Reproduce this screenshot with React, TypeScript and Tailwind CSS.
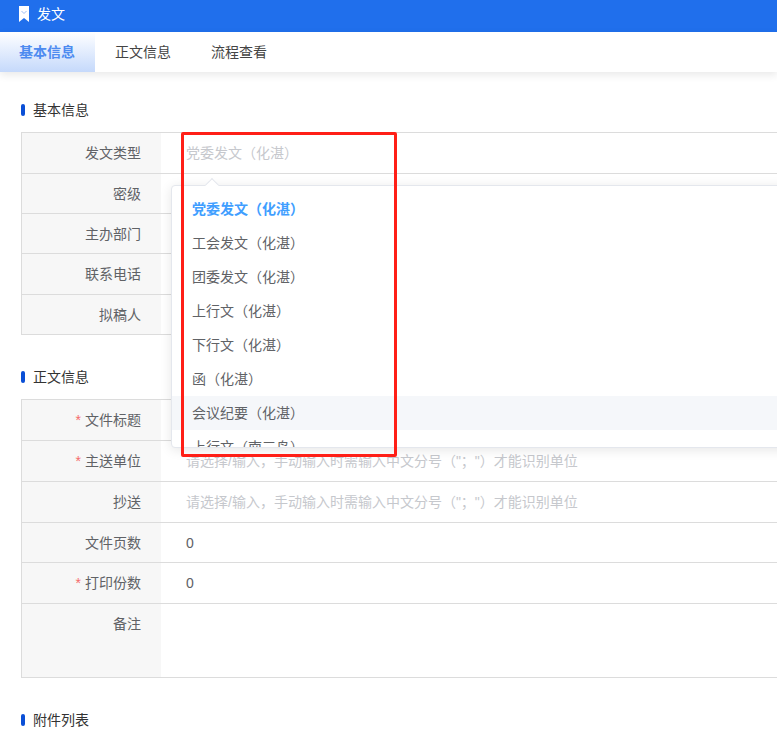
const font = '[font-family:"Liberation_Sans","Noto_Sans_CJK_SC",sans-serif]';

const baseRows = [
  { label: '发文类型', value: '党委发文（化湛）', placeholder: true, h: 'h-[41px]' },
  { label: '密级', h: 'h-[40px]' },
  { label: '主办部门', h: 'h-[40px]' },
  { label: '联系电话', h: 'h-[41px]' },
  { label: '拟稿人', h: 'h-[40px]' },
];

const hint = '请选择/输入，手动输入时需输入中文分号（"；"）才能识别单位';

const bodyRows = [
  { label: '文件标题', required: true, h: 'h-[41px]' },
  { label: '主送单位', required: true, value: hint, placeholder: true, h: 'h-[41px]' },
  { label: '抄送', value: hint, placeholder: true, h: 'h-[41px]' },
  { label: '文件页数', value: '0', h: 'h-[40px]' },
  { label: '打印份数', required: true, value: '0', h: 'h-[41px]' },
];

const options = [
  '党委发文（化湛）',
  '工会发文（化湛）',
  '团委发文（化湛）',
  '上行文（化湛）',
  '下行文（化湛）',
  '函（化湛）',
  '会议纪要（化湛）',
  '上行文（南三岛）',
];

type Row = { label: string; value?: string; placeholder?: boolean; required?: boolean; h: string };

function SectionTitle({ text }: { text: string }) {
  return (
    <div className="flex h-5 items-center pl-[21px]">
      <span className="h-3 w-1 rounded-sm bg-[#0a4fd6]" />
      <span className="ml-2 text-sm leading-5 text-[#333]">{text}</span>
    </div>
  );
}

function FormRow({ row }: { row: Row }) {
  return (
    <div className={`flex border-b border-[#dcdcdc] ${row.h}`}>
      <div className="flex w-[139px] shrink-0 items-center justify-end bg-[#f7f7f7] pr-5 text-sm text-[#606266]">
        {row.required && <span className="mr-1 text-[#f56c6c]">*</span>}
        {row.label}
      </div>
      <div className={`flex flex-1 items-center whitespace-nowrap pl-[25px] text-sm ${row.placeholder ? 'text-[#c6c8cd]' : 'text-[#606266]'}`}>
        {row.value}
      </div>
    </div>
  );
}

export default function App() {
  return (
    <div className={`relative h-[734px] w-[777px] overflow-hidden bg-white ${font}`}>
      {/* Header */}
      <div className="flex h-8 items-center bg-[#206fec] pb-1 pl-[19px] text-white">
        <svg width="10" height="16" viewBox="0 0 10 16">
          <path d="M0 0H10V16L5 12L0 16Z" fill="#fff" />
          <path d="M2.5 5L5 7.5L7.5 5" fill="none" stroke="#9dbdf5" strokeWidth="1" />
        </svg>
        <span className="ml-2 text-sm leading-5">发文</span>
      </div>

      {/* Tabs */}
      <div className="flex h-10 bg-white text-sm shadow-[0_3px_8px_rgba(0,0,0,0.09)]">
        <div className="flex w-[95px] items-center bg-gradient-to-b from-white to-[#c5d9fb] pl-[19px] font-bold text-[#4d8bf0]">
          基本信息
        </div>
        <div className="flex w-[116px] items-center pl-5 text-[#444]">正文信息</div>
        <div className="flex items-center text-[#444]">流程查看</div>
      </div>

      {/* 基本信息 */}
      <div className="pt-7">
        <SectionTitle text="基本信息" />
        <div className="ml-[21px] mt-[12px] w-[800px] border-l border-t border-[#dcdcdc]">
          {baseRows.map((r) => (
            <FormRow key={r.label} row={r} />
          ))}
        </div>
      </div>

      {/* 正文信息 */}
      <div className="pt-8">
        <SectionTitle text="正文信息" />
        <div className="ml-[21px] mt-[12px] w-[800px] border-l border-t border-[#dcdcdc]">
          {bodyRows.map((r) => (
            <FormRow key={r.label} row={r} />
          ))}
          <div className="flex h-[74px] border-b border-[#dcdcdc]">
            <div className="w-[139px] shrink-0 bg-[#f7f7f7] pr-5 pt-[10px] text-right text-sm leading-5 text-[#606266]">
              备注
            </div>
          </div>
        </div>
      </div>

      {/* 附件列表 */}
      <div className="pt-8">
        <SectionTitle text="附件列表" />
      </div>

      {/* Select dropdown */}
      <div className="absolute left-[171px] top-[185px] h-[263px] w-[700px] rounded border border-[#e4e7ed] bg-white pt-[6px] shadow-[0_2px_12px_rgba(0,0,0,0.1)]">
        <span className="absolute -top-[6px] left-[35px] h-[10px] w-[10px] rotate-45 border-l border-t border-[#e4e7ed] bg-white" />
        <div className="h-full overflow-hidden">
          {options.map((o, i) => (
            <div
              key={o}
              className={`flex h-[34px] items-center whitespace-nowrap pl-5 text-sm ${
                i === 0 ? 'font-bold text-[#409eff]' : 'text-[#606266]'
              } ${i === 6 ? 'bg-[#f5f7fa]' : ''}`}
            >
              {o}
            </div>
          ))}
        </div>
      </div>

      {/* Red annotation box */}
      <div className="absolute left-[181px] top-[132px] h-[325px] w-[216px] rounded-[2px] border-[3px] border-[#ff1f17]" />
    </div>
  );
}
